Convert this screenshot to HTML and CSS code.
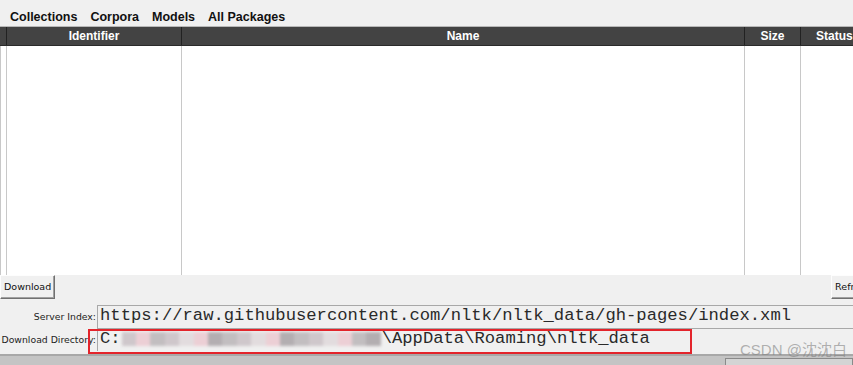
FILE: index.html
```html
<!DOCTYPE html>
<html>
<head>
<meta charset="utf-8">
<link rel="stylesheet" href="styles.css">
</head>
<body>
<div class="app">
  <div class="menubar">
    <span class="tab">Collections</span>
    <span class="tab">Corpora</span>
    <span class="tab">Models</span>
    <span class="tab">All Packages</span>
  </div>
  <div class="table">
    <div class="thead">
      <div class="c c0"></div>
      <div class="c c1">Identifier</div>
      <div class="c c2">Name</div>
      <div class="c c3">Size</div>
      <div class="c c4">Status</div>
    </div>
    <div class="tbody">
      <div class="b c0"></div>
      <div class="b c1"></div>
      <div class="b c2"></div>
      <div class="b c3"></div>
      <div class="b c4"></div>
    </div>
  </div>
  <div class="buttons">
    <button class="btn">Download</button>
    <button class="btn refresh">Refresh</button>
  </div>
  <div class="form">
    <div class="row">
      <label class="lbl">Server Index:</label>
      <div class="entry">https://raw.githubusercontent.com/nltk/nltk_data/gh-pages/index.xml</div>
    </div>
    <div class="row">
      <label class="lbl">Download Directory:</label>
      <div class="entry">C:<span class="blur"><i class="p1"></i><i class="p2"></i><i class="p3"></i><i class="p1"></i><i class="p4"></i><i class="p2"></i><i class="p5"></i><i class="p3"></i><i class="p1"></i><i class="p4"></i><i class="p2"></i><i class="p5"></i><i class="p3"></i><i class="p1"></i><i class="p4"></i><i class="p2"></i><i class="p3"></i><i class="p5"></i></span>\AppData\Roaming\nltk_data</div>
    </div>
    <div class="redbox"></div>
    <div class="watermark">CSDN @沈沈白</div>
  </div>
  <div class="status">
    <div class="statusbox"></div>
  </div>
</div>
</body>
</html>
```
FILE: styles.css
```css
html, body {
  margin: 0;
  padding: 0;
}
body {
  width: 853px;
  height: 365px;
  overflow: hidden;
  background: #f0f0f0;
}
.app {
  display: flex;
  flex-direction: column;
  height: 365px;
}
.menubar {
  height: 26px;
  display: flex;
  align-items: center;
  gap: 13px;
  padding-left: 10px;
  padding-top: 7px;
  box-sizing: border-box;
  font-family: "Liberation Sans", Arial, sans-serif;
  font-weight: bold;
  font-size: 12.5px;
  color: #111;
}
.table {
  height: 248px;
  display: flex;
  flex-direction: column;
  border-top: 1px solid #b8b8b8;
}
.thead {
  height: 18px;
  display: flex;
  background: #434343;
  color: #fff;
  font-family: "Liberation Sans", Arial, sans-serif;
  font-weight: bold;
  font-size: 12px;
  border-bottom: 1px solid #2a2a2a;
}
.thead .c {
  display: flex;
  align-items: center;
  justify-content: center;
  border-right: 1px solid #222;
  box-sizing: border-box;
  line-height: 18px;
}
.tbody {
  flex: 1;
  display: flex;
  background: #fff;
}
.tbody .b {
  border-right: 1px solid #c8c8c8;
  box-sizing: border-box;
}
.c0 { width: 7px; flex: none; }
.tbody .c0 { border-left: 1px solid #c8c8c8; }
.c1 { width: 175px; flex: none; }
.c2 { width: 563px; flex: none; }
.c3 { width: 56px; flex: none; }
.c4 { flex: 1; }
.thead .c4 { justify-content: flex-start; padding-left: 15px; border-right: none; }
.tbody .c4 { border-right: none; }
.buttons {
  height: 30px;
  display: flex;
  justify-content: space-between;
  align-items: flex-start;
  padding-top: 0;
  box-sizing: border-box;
}
.btn {
  height: 24px;
  margin: 0;
  padding: 0 3px 2px;
  background: #f0f0f0;
  border: 1px solid;
  border-color: #fdfdfd #707070 #707070 #fdfdfd;
  box-shadow: inset -1px -1px 0 #a0a0a0;
  font-family: "DejaVu Sans", Verdana, sans-serif;
  font-size: 9.5px;
  color: #111;
}
.refresh {
  margin-right: -22px;
}
.form {
  position: relative;
  display: flex;
  flex-direction: column;
  height: 49px;
}
.row {
  display: flex;
  align-items: stretch;
  height: 23px;
}
.lbl {
  width: 97px;
  flex: none;
  text-align: right;
  padding-right: 1px;
  font-family: "DejaVu Sans", Verdana, sans-serif;
  font-size: 9.3px;
  color: #222;
  display: flex;
  align-items: flex-start;
  justify-content: flex-end;
  padding-top: 6px;
  box-sizing: border-box;
  white-space: nowrap;
}
.entry {
  flex: 1;
  border-top: 1px solid #a8a8a8;
  border-left: 1px solid #a8a8a8;
  padding-left: 2px;
  font-family: "Liberation Mono", "Courier New", monospace;
  font-size: 17.2px;
  line-height: 20px;
  color: #2a2a2a;
  white-space: nowrap;
  overflow: hidden;
  display: flex;
  align-items: flex-start;
}
.blur {
  display: inline-flex;
  width: 259px;
  height: 14px;
  margin: 3px 1px 0;
  filter: blur(1.5px);
}
.blur i {
  flex: 1;
  height: 14px;
}
.p1 { background: #cfc7cb; }
.p2 { background: #eccfd5; }
.p3 { background: #c2bec0; }
.p4 { background: #e2dcde; }
.p5 { background: #b3aeb1; }
.redbox {
  position: absolute;
  left: 88px;
  top: 24px;
  width: 604px;
  height: 25px;
  border: 2px solid #e3242b;
  box-sizing: border-box;
}
.watermark {
  position: absolute;
  left: 740px;
  top: 33px;
  font-family: "Liberation Sans", "Noto Sans CJK SC", sans-serif;
  font-size: 15px;
  color: rgba(130, 130, 130, 0.6);
}
.status {
  flex: 1;
  background: #c4c4c4;
  border-top: 2px solid #a8a8a8;
  display: flex;
  justify-content: flex-end;
  align-items: flex-end;
}
.statusbox {
  width: 126px;
  height: 6px;
  border: 1px solid #8a8a8a;
  border-bottom: none;
  background: #d4d4d4;
}
```
